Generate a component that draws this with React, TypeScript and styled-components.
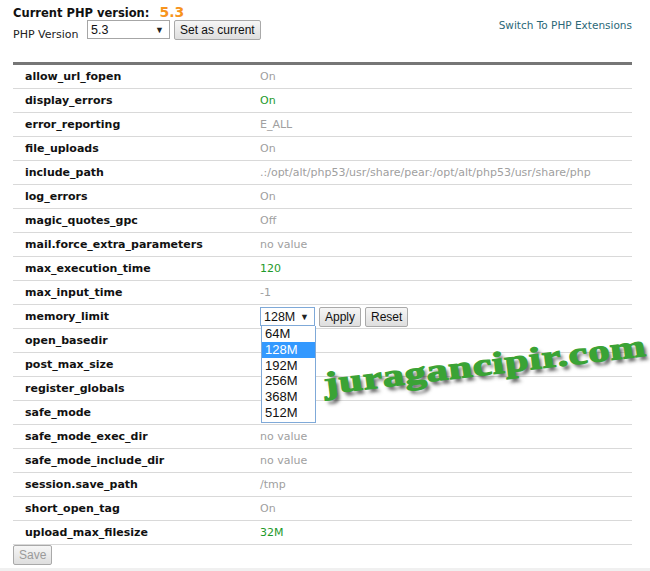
import React from 'react';
import styled, { createGlobalStyle } from 'styled-components';

const GlobalStyle = createGlobalStyle`
  body {
    margin: 0;
    background: #fff;
    font-family: "DejaVu Sans", Verdana, sans-serif;
  }
`;

const Page = styled.div`
  width: 619px;
  padding: 0 18px 0 13px;
  position: relative;
`;

const Header = styled.div`
  display: flex;
  justify-content: space-between;
  align-items: flex-end;
  height: 62px;
`;

const HeaderLeft = styled.div`
  display: flex;
  flex-direction: column;
  padding-top: 4px;
  height: 100%;
  box-sizing: border-box;
`;

const Title = styled.div`
  font-size: 11.5px;
  font-weight: bold;
  color: #111;
  display: flex;
  align-items: baseline;
  gap: 10px;
  height: 16px;
`;

const Version = styled.span`
  font-size: 14px;
  font-weight: bold;
  color: #f7941d;
`;

const VersionRow = styled.div`
  display: flex;
  align-items: flex-start;
  margin-top: 0px;
`;

const Label = styled.span`
  font-size: 11px;
  color: #222;
  width: 74px;
  padding-top: 8px;
`;

const SwitchLink = styled.a`
  font-size: 10.5px;
  color: #2b6878;
  text-decoration: none;
  align-self: flex-start;
  margin-top: 19px;
`;

const FakeSelect = styled.div<{ $w: number; $focus?: boolean }>`
  box-sizing: border-box;
  width: ${p => p.$w}px;
  height: 19px;
  border: 1px solid ${p => (p.$focus ? '#7fa9d8' : '#a6a6a6')};
  background: #fff;
  display: flex;
  align-items: center;
  justify-content: space-between;
  padding: 0 5px 0 3px;
  font-family: "Liberation Sans", Arial, sans-serif;
  font-size: 12.5px;
  color: #111;
  position: relative;
`;

const Arrow = styled.span`
  font-size: 9px;
  color: #222;
`;

const Button = styled.button<{ $disabled?: boolean }>`
  box-sizing: border-box;
  height: 20px;
  margin-left: 4px;
  padding: 0 5px;
  border: 1px solid #a9a9a9;
  border-radius: 2px;
  background: linear-gradient(#f6f6f6, #dedede);
  font-family: "Liberation Sans", Arial, sans-serif;
  font-size: 12px;
  color: ${p => (p.$disabled ? '#9a9a9a' : '#111')};
  line-height: 18px;
`;

const Divider = styled.div`
  height: 3px;
  background: #767676;
`;

const Row = styled.div`
  display: grid;
  grid-template-columns: 247px 1fr;
  align-items: center;
  height: 23px;
  border-bottom: 1px solid #d9d9d9;
  position: relative;
`;

const Name = styled.span`
  padding-left: 12px;
  font-size: 11px;
  font-weight: bold;
  color: #111;
`;

const Value = styled.span<{ $green?: boolean }>`
  font-size: 11px;
  color: ${p => (p.$green ? '#1e9a2a' : '#a0a0a0')};
`;

const Controls = styled.div`
  display: flex;
  align-items: center;
`;

const OptionList = styled.div`
  position: absolute;
  top: 18px;
  left: 0;
  box-sizing: border-box;
  width: 55px;
  border: 1px solid #7fa9d8;
  border-top: none;
  background: #fff;
  z-index: 5;
  padding-bottom: 1px;
`;

const Option = styled.div<{ $active?: boolean }>`
  height: 15.8px;
  line-height: 15.8px;
  padding-left: 3px;
  font-family: "Liberation Sans", Arial, sans-serif;
  font-size: 13px;
  color: ${p => (p.$active ? '#fff' : '#111')};
  background: ${p => (p.$active ? '#3399ff' : '#fff')};
`;

const Footer = styled.div`
  height: 22px;
  display: flex;
  align-items: flex-start;
`;

const FooterBand = styled.div`
  height: 4px;
  margin: 1px -18px 0 -13px;
  background: #f0f0f0;
`;

const Watermark = styled.div`
  position: absolute;
  left: 326px;
  top: 366px;
  font-family: "Liberation Serif", "DejaVu Serif", serif;
  font-weight: bold;
  font-size: 31px;
  letter-spacing: 0.5px;
  color: #3aa335;
  -webkit-text-stroke: 1.2px #3aa335;
  text-shadow: 2px 4px 3px rgba(40, 40, 40, 0.7);
  transform-origin: left bottom;
  transform: rotate(-6.8deg) scaleX(1.38);
  white-space: nowrap;
  pointer-events: none;
  z-index: 6;
`;

type Setting = { name: string; value?: string; green?: boolean };

const settings: Setting[] = [
  { name: 'allow_url_fopen', value: 'On' },
  { name: 'display_errors', value: 'On', green: true },
  { name: 'error_reporting', value: 'E_ALL' },
  { name: 'file_uploads', value: 'On' },
  { name: 'include_path', value: '.:/opt/alt/php53/usr/share/pear:/opt/alt/php53/usr/share/php' },
  { name: 'log_errors', value: 'On' },
  { name: 'magic_quotes_gpc', value: 'Off' },
  { name: 'mail.force_extra_parameters', value: 'no value' },
  { name: 'max_execution_time', value: '120', green: true },
  { name: 'max_input_time', value: '-1' },
  { name: 'memory_limit' },
  { name: 'open_basedir', value: '' },
  { name: 'post_max_size', value: '' },
  { name: 'register_globals', value: '' },
  { name: 'safe_mode', value: '' },
  { name: 'safe_mode_exec_dir', value: 'no value' },
  { name: 'safe_mode_include_dir', value: 'no value' },
  { name: 'session.save_path', value: '/tmp' },
  { name: 'short_open_tag', value: 'On' },
  { name: 'upload_max_filesize', value: '32M', green: true },
];

const memoryOptions = ['64M', '128M', '192M', '256M', '368M', '512M'];

const App: React.FC = () => {
  return (
    <Page>
      <GlobalStyle />
      <Header>
        <HeaderLeft>
          <Title>
            Current PHP version: <Version>5.3</Version>
          </Title>
          <VersionRow>
            <Label>PHP Version</Label>
            <FakeSelect $w={83}>
              5.3 <Arrow>▼</Arrow>
            </FakeSelect>
            <Button>Set as current</Button>
          </VersionRow>
        </HeaderLeft>
        <SwitchLink href="#">Switch To PHP Extensions</SwitchLink>
      </Header>
      <Divider />

      {settings.map(s => (
        <Row key={s.name}>
          <Name>{s.name}</Name>
          {s.value !== undefined ? (
            <Value $green={s.green}>{s.value}</Value>
          ) : (
            <Controls>
              <FakeSelect $w={55} $focus>
                128M <Arrow>▼</Arrow>
                <OptionList>
                  {memoryOptions.map(o => (
                    <Option key={o} $active={o === '128M'}>
                      {o}
                    </Option>
                  ))}
                </OptionList>
              </FakeSelect>
              <Button>Apply</Button>
              <Button>Reset</Button>
            </Controls>
          )}
        </Row>
      ))}

      <Footer>
        <Button $disabled style={{ marginLeft: 0 }}>Save</Button>
      </Footer>
      <FooterBand />

      <Watermark>juragancipir.com</Watermark>
    </Page>
  );
};

export default App;
